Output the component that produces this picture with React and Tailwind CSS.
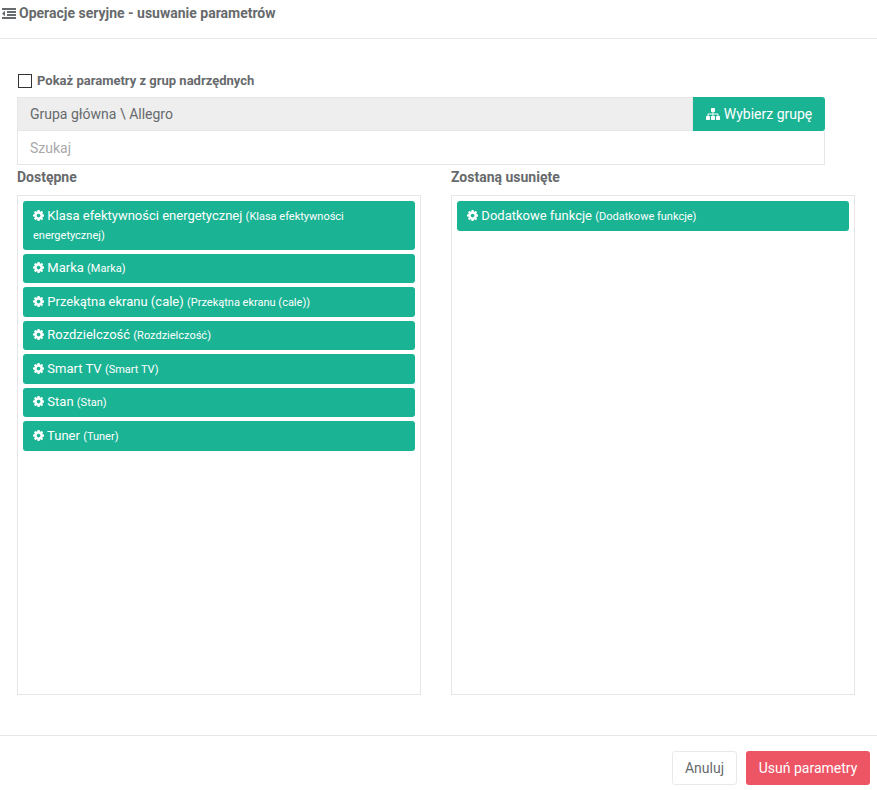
const available = [
  ["Klasa efektywności energetycznej", "Klasa efektywności energetycznej"],
  ["Marka", "Marka"],
  ["Przekątna ekranu (cale)", "Przekątna ekranu (cale)"],
  ["Rozdzielczość", "Rozdzielczość"],
  ["Smart TV", "Smart TV"],
  ["Stan", "Stan"],
  ["Tuner", "Tuner"],
];

const removed = [["Dodatkowe funkcje", "Dodatkowe funkcje"]];

// Font Awesome 4 shapes, chunkier than the ones in react-icons
function CogIcon() {
  return (
    <svg viewBox="128 128 1536 1536" fill="currentColor" className="inline h-[11.14px] w-[11.14px] align-[-1px]">
      <path d="M1152 896q0-106-75-181t-181-75-181 75-75 181 75 181 181 75 181-75 75-181zm512-109v222q0 12-8 23t-20 13l-185 28q-19 54-39 91 35 50 107 138 10 12 10 25t-9 23q-27 37-99 108t-94 71q-12 0-26-9l-138-108q-44 23-91 38-16 136-29 186-7 28-36 28h-222q-14 0-24.5-8.5t-11.5-21.5l-28-184q-49-16-90-37l-141 107q-10 9-25 9-14 0-25-11-126-114-165-168-7-10-7-23 0-12 8-23 15-21 51-66.5t54-70.5q-27-50-41-99l-183-27q-13-2-21-12.5t-8-23.5v-222q0-12 8-23t19-13l186-28q14-46 39-92-40-57-107-138-10-12-10-24 0-10 9-23 26-36 98.5-107.5t94.5-71.5q13 0 26 10l138 107q44-23 91-38 16-136 29-186 7-28 36-28h222q14 0 24.5 8.5t11.5 21.5l28 184q49 16 90 37l142-107q9-9 24-9 13 0 25 10 129 119 165 170 7 8 7 22 0 12-8 23-15 21-51 66.5t-54 70.5q26 50 41 98l183 28q13 2 21 12.5t8 23.5z" />
    </svg>
  );
}

function SitemapIcon() {
  return (
    <svg viewBox="0 0 1792 1792" fill="currentColor" className="h-[14px] w-[14px] shrink-0">
      <path d="M1792 1248v320q0 40-28 68t-68 28h-320q-40 0-68-28t-28-68v-320q0-40 28-68t68-28h96v-192h-512v192h96q40 0 68 28t28 68v320q0 40-28 68t-68 28h-320q-40 0-68-28t-28-68v-320q0-40 28-68t68-28h96v-192h-512v192h96q40 0 68 28t28 68v320q0 40-28 68t-68 28h-320q-40 0-68-28t-28-68v-320q0-40 28-68t68-28h96v-192q0-52 38-90t90-38h512v-192h-96q-40 0-68-28t-28-68v-320q0-40 28-68t68-28h320q40 0 68 28t28 68v320q0 40-28 68t-68 28h-96v192h512q52 0 90 38t38 90v192h96q40 0 68 28t28 68z" />
    </svg>
  );
}

function OutdentIcon() {
  return (
    <svg viewBox="0 0 1792 1792" fill="currentColor" className="mt-[3px] h-[14px] w-[14px] shrink-0">
      <path d="M384 544v576q0 13-9.5 22.5t-22.5 9.5q-14 0-23-9l-288-288q-9-9-9-23t9-23l288-288q9-9 23-9 13 0 22.5 9.5t9.5 22.5zm1408 768v192q0 13-9.5 22.5t-22.5 9.5h-1728q-13 0-22.5-9.5t-9.5-22.5v-192q0-13 9.5-22.5t22.5-9.5h1728q13 0 22.5 9.5t9.5 22.5zm0-384v192q0 13-9.5 22.5t-22.5 9.5h-1088q-13 0-22.5-9.5t-9.5-22.5v-192q0-13 9.5-22.5t22.5-9.5h1088q13 0 22.5 9.5t9.5 22.5zm0-384v192q0 13-9.5 22.5t-22.5 9.5h-1088q-13 0-22.5-9.5t-9.5-22.5v-192q0-13 9.5-22.5t22.5-9.5h1088q13 0 22.5 9.5t9.5 22.5zm0-384v192q0 13-9.5 22.5t-22.5 9.5h-1728q-13 0-22.5-9.5t-9.5-22.5v-192q0-13 9.5-22.5t22.5-9.5h1728q13 0 22.5 9.5t9.5 22.5z" />
    </svg>
  );
}

function ParamItem({ name, code }) {
  return (
    <div className="mb-[4px] rounded-[3px] bg-[#1ab394] px-[10px] pb-[5.3px] pt-[5.7px] text-[13px] leading-[18.57px] text-white">
      <CogIcon />{" "}
      {name} <small className="text-[11px] leading-none">({code})</small>
    </div>
  );
}

function ParamList({ title, items }) {
  return (
    <div className="w-[404px]">
      <div className="mb-[9px] text-[14px] font-bold leading-[18px] text-[#676a6c]">{title}</div>
      <div className="h-[500px] border border-[#e5e6e7] px-[5px] pt-[5.4px]">
        {items.map(([name, code]) => (
          <ParamItem key={name} name={name} code={code} />
        ))}
      </div>
    </div>
  );
}

export default function App() {
  return (
    <div className="flex h-[790px] w-[877px] flex-col overflow-hidden bg-white font-['Roboto',sans-serif] text-[#676a6c]">
      {/* Header */}
      <div className="flex h-[39px] items-start gap-[3px] border-b border-[#e7e7e7] pl-[2px] pt-[4px]">
        <OutdentIcon />
        <span className="text-[14px] font-bold leading-[18px]">Operacje seryjne - usuwanie parametrów</span>
      </div>

      {/* Body */}
      <div className="flex-1 pl-[17px] pt-[33px]">
        <label className="mb-[7px] flex h-[18px] items-center gap-[5px] pl-[1px]">
          <span className="h-[14px] w-[14px] border border-[#333]" />
          <span className="text-[13px] font-bold leading-[18px]">Pokaż parametry z grup nadrzędnych</span>
        </label>

        <div className="w-[808px]">
          <div className="flex h-[34px]">
            <div className="flex flex-1 items-center border border-[#e5e6e7] bg-[#eeeeee] px-[12px] text-[14px]">
              Grupa główna \ Allegro
            </div>
            <button className="flex w-[132px] items-center justify-center gap-[4px] rounded-r-[3px] bg-[#1ab394] text-[14px] text-white">
              <SitemapIcon />
              Wybierz grupę
            </button>
          </div>
          <input
            placeholder="Szukaj"
            className="block h-[34px] w-full border border-t-0 border-[#e5e6e7] px-[12px] text-[14px] outline-none placeholder:text-[#a9a9a9]"
          />
        </div>

        <div className="mt-[3px] flex gap-[30px]">
          <ParamList title="Dostępne" items={available} />
          <ParamList title="Zostaną usunięte" items={removed} />
        </div>
      </div>

      {/* Footer */}
      <div className="flex h-[55px] items-start justify-end gap-[9px] border-t border-[#e5e6e7] pr-[7px] pt-[15px]">
        <button className="h-[34px] w-[65px] rounded-[3px] border border-[#e7eaec] bg-white text-[14px] text-[#676a6c]">Anuluj</button>
        <button className="h-[34px] w-[124px] rounded-[3px] bg-[#ed5565] text-[14px] text-white">Usuń parametry</button>
      </div>
    </div>
  );
}
